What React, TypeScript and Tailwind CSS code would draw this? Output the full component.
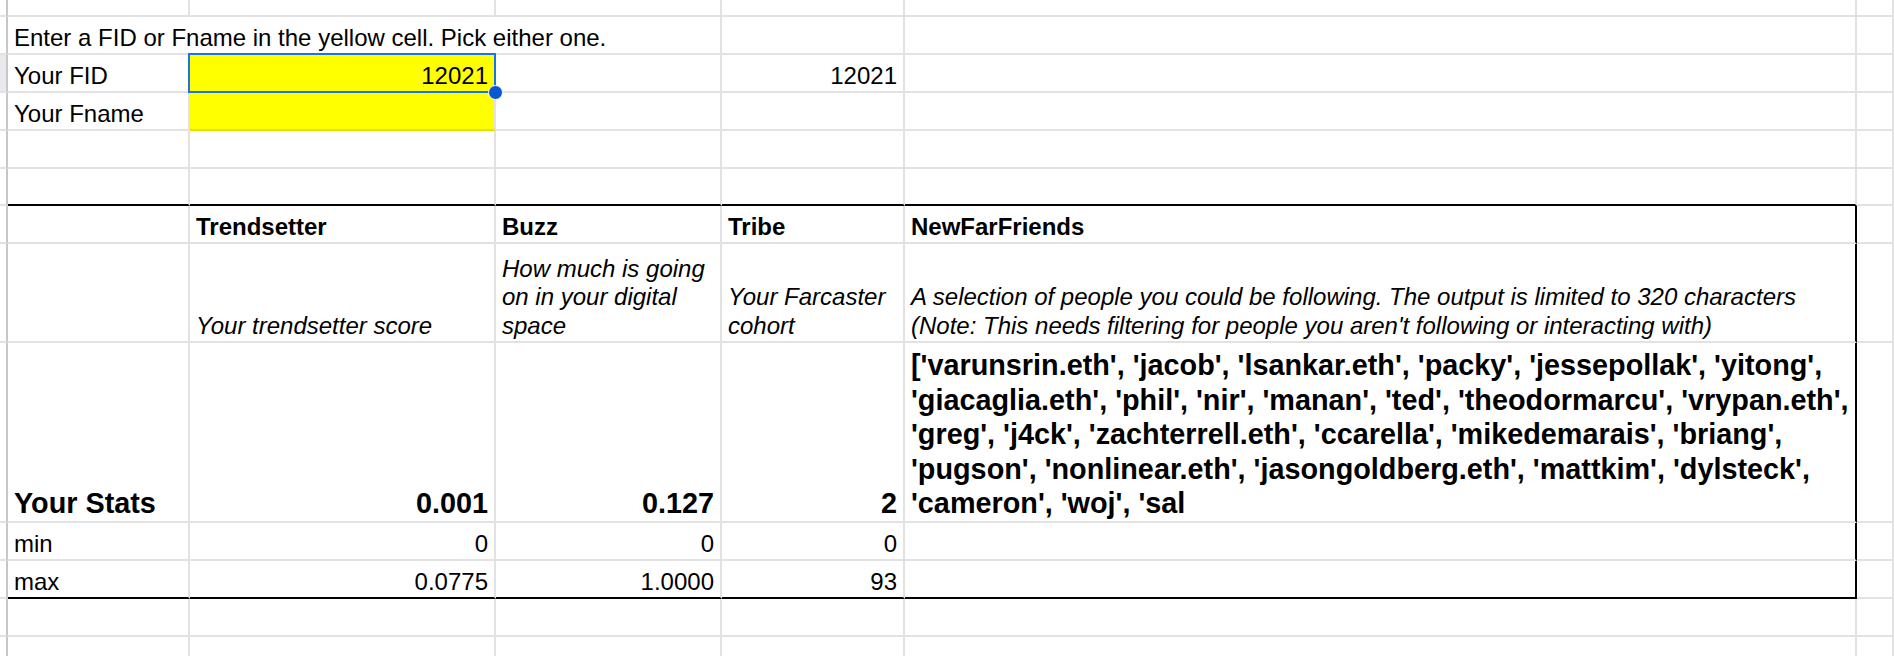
import React from 'react'

// Sheet column template: row header stub, A..E, then the partly visible F
const cols = 'grid grid-cols-[8px_182px_306px_226px_183px_952px_1fr]'

const friends =
  "['varunsrin.eth', 'jacob', 'lsankar.eth', 'packy', 'jessepollak', 'yitong', 'giacaglia.eth', 'phil', 'nir', 'manan', 'ted', 'theodormarcu', 'vrypan.eth', 'greg', 'j4ck', 'zachterrell.eth', 'ccarella', 'mikedemarais', 'briang', 'pugson', 'nonlinear.eth', 'jasongoldberg.eth', 'mattkim', 'dylsteck', 'cameron', 'woj', 'sal"

type CellProps = {
  children?: React.ReactNode
  right?: boolean
  span3?: boolean
  bb?: boolean
  br?: boolean
  yellow?: boolean
  className?: string
}

function Cell({ children, right, span3, bb, br, yellow, className = '' }: CellProps) {
  return (
    <div
      className={[
        'relative flex items-end min-w-0 border-r-2 border-b-2 px-[6px]',
        bb ? 'border-b-black' : yellow ? 'border-b-[#e3e300]' : 'border-b-[#e2e2e2]',
        br ? 'border-r-black' : 'border-r-[#e2e2e2]',
        right ? 'justify-end text-right' : '',
        span3 ? 'col-span-3' : '',
        yellow ? 'bg-[#ffff00]' : 'bg-white',
        className,
      ].join(' ')}
    >
      {children}
    </div>
  )
}

function Row({ h, active, children }: { h: string; active?: boolean; children: React.ReactNode }) {
  return (
    <div className={`${cols} ${h}`}>
      <div
        className={`border-r-2 border-b-2 border-r-[#c7c7c7] border-b-[#e2e2e2] ${
          active ? 'bg-[#e8eaed]' : 'bg-white'
        }`}
      />
      {children}
    </div>
  )
}

function Empty({ n }: { n: number }) {
  return (
    <>
      {Array.from({ length: n }).map((_, i) => (
        <Cell key={i} />
      ))}
    </>
  )
}

export default function App() {
  return (
    <div className="w-[1894px] h-[656px] overflow-hidden bg-white font-['Liberation_Sans',Arial,sans-serif] text-[24px] leading-[1.2] text-black">
      <Row h="h-[17px]">
        <Empty n={6} />
      </Row>

      <Row h="h-[38px]">
        <Cell span3>
          <div className="whitespace-nowrap">Enter a FID or Fname in the yellow cell. Pick either one.</div>
        </Cell>
        <Empty n={3} />
      </Row>

      <Row h="h-[38px]" active>
        <Cell>
          <div>Your FID</div>
        </Cell>
        <Cell yellow right>
          <div>12021</div>
          {/* active selection + fill handle */}
          <div className="absolute -left-[2px] -top-[2px] -right-[2px] -bottom-[2px] border-2 border-[#1a73e8] z-10 pointer-events-none" />
          <div className="absolute -right-[9px] -bottom-[9px] w-[15px] h-[15px] rounded-full bg-[#0b57d0] border border-white z-20" />
        </Cell>
        <Cell />
        <Cell right>
          <div>12021</div>
        </Cell>
        <Empty n={2} />
      </Row>

      <Row h="h-[38px]">
        <Cell>
          <div>Your Fname</div>
        </Cell>
        <Cell yellow />
        <Empty n={4} />
      </Row>

      <Row h="h-[38px]">
        <Empty n={6} />
      </Row>

      <Row h="h-[37px]">
        <Cell bb />
        <Cell bb />
        <Cell bb />
        <Cell bb />
        <Cell bb />
        <Cell />
      </Row>

      {/* headers */}
      <Row h="h-[38px]">
        <Cell />
        <Cell>
          <div className="font-bold">Trendsetter</div>
        </Cell>
        <Cell>
          <div className="font-bold">Buzz</div>
        </Cell>
        <Cell>
          <div className="font-bold">Tribe</div>
        </Cell>
        <Cell br>
          <div className="font-bold">NewFarFriends</div>
        </Cell>
        <Cell />
      </Row>

      {/* descriptions */}
      <Row h="h-[99px]">
        <Cell />
        <Cell>
          <div className="italic">Your trendsetter score</div>
        </Cell>
        <Cell>
          <div className="italic">How much is going on in your digital space</div>
        </Cell>
        <Cell>
          <div className="italic">Your Farcaster cohort</div>
        </Cell>
        <Cell br>
          <div className="italic">
            A selection of people you could be following. The output is limited to 320 characters
            <br />
            (Note: This needs filtering for people you aren't following or interacting with)
          </div>
        </Cell>
        <Cell />
      </Row>

      {/* stats */}
      <Row h="h-[180px]">
        <Cell>
          <div className="font-bold text-[28.8px] leading-[1.2]">Your Stats</div>
        </Cell>
        <Cell right>
          <div className="font-bold text-[28.8px] leading-[1.2]">0.001</div>
        </Cell>
        <Cell right>
          <div className="font-bold text-[28.8px] leading-[1.2]">0.127</div>
        </Cell>
        <Cell right>
          <div className="font-bold text-[28.8px] leading-[1.2]">2</div>
        </Cell>
        <Cell br className="pr-[2px]">
          <div className="font-bold text-[28.8px] leading-[1.2]">{friends}</div>
        </Cell>
        <Cell />
      </Row>

      <Row h="h-[38px]">
        <Cell>
          <div>min</div>
        </Cell>
        <Cell right>
          <div>0</div>
        </Cell>
        <Cell right>
          <div>0</div>
        </Cell>
        <Cell right>
          <div>0</div>
        </Cell>
        <Cell br />
        <Cell />
      </Row>

      <Row h="h-[38px]">
        <Cell bb>
          <div>max</div>
        </Cell>
        <Cell bb right>
          <div>0.0775</div>
        </Cell>
        <Cell bb right>
          <div>1.0000</div>
        </Cell>
        <Cell bb right>
          <div>93</div>
        </Cell>
        <Cell bb br />
        <Cell />
      </Row>

      <Row h="h-[38px]">
        <Empty n={6} />
      </Row>
      <Row h="h-[38px]">
        <Empty n={6} />
      </Row>
    </div>
  )
}
